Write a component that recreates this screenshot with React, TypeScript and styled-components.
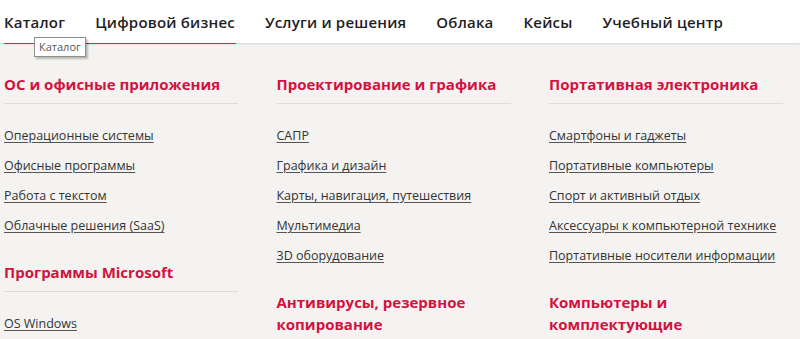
import React from "react";
import styled, { createGlobalStyle } from "styled-components";

const GlobalStyle = createGlobalStyle`
  html, body { margin: 0; padding: 0; }
  body {
    background: #f4f3f1;
    font-family: "Open Sans", "DejaVu Sans", sans-serif;
    color: #333;
    overflow: hidden;
  }
`;

const Header = styled.header`
  position: relative;
  height: 43px;
  background: #fff;
  box-shadow: 0 1px 2px rgba(0, 0, 0, 0.12);
  z-index: 2;
`;

const Nav = styled.nav`
  display: flex;
  align-items: center;
  height: 100%;
  padding-left: 4px;
  gap: 30px;
`;

const NavItem = styled.a`
  font-size: 15px;
  font-weight: 600;
  letter-spacing: 0.2px;
  color: #1e1e1e;
  text-decoration: none;
  white-space: nowrap;
`;

const ActiveLine = styled.div`
  position: absolute;
  left: 4px;
  bottom: -1px;
  width: 232px;
  height: 1px;
  background: #d4204a;
`;

const Tooltip = styled.div`
  position: absolute;
  left: 34px;
  top: 37px;
  padding: 1px 4px 2px;
  font-size: 11px;
  color: #575757;
  background: #fff;
  border: 1px solid #8e8e8e;
  box-shadow: 2px 2px 2px rgba(0, 0, 0, 0.25);
  z-index: 3;
`;

const Grid = styled.main`
  display: grid;
  grid-template-columns: repeat(3, 234px);
  column-gap: 38.5px;
  padding: 30px 4px 0;
  align-items: start;
`;

const Column = styled.div`
  display: flex;
  flex-direction: column;
  gap: 20px;
`;

const Section = styled.section``;

const Heading = styled.h3`
  margin: 0;
  padding-bottom: 8px;
  border-bottom: 1px solid #dedcd9;
  font-size: 15px;
  line-height: 22px;
  font-weight: 700;
  color: #d2123f;
`;

const List = styled.ul`
  list-style: none;
  margin: 0;
  padding: 17px 0 0;
`;

const Item = styled.li`
  line-height: 30px;
  font-size: 12.5px;
`;

const Link = styled.a`
  color: #333;
  text-decoration: underline;
  text-underline-offset: 2px;
  text-decoration-color: #555;
`;

type Sec = { title: string; links: string[] };

const columns: Sec[][] = [
  [
    {
      title: "ОС и офисные приложения",
      links: [
        "Операционные системы",
        "Офисные программы",
        "Работа с текстом",
        "Облачные решения (SaaS)",
      ],
    },
    { title: "Программы Microsoft", links: ["OS Windows"] },
  ],
  [
    {
      title: "Проектирование и графика",
      links: [
        "САПР",
        "Графика и дизайн",
        "Карты, навигация, путешествия",
        "Мультимедиа",
        "3D оборудование",
      ],
    },
    { title: "Антивирусы, резервное копирование", links: [] },
  ],
  [
    {
      title: "Портативная электроника",
      links: [
        "Смартфоны и гаджеты",
        "Портативные компьютеры",
        "Спорт и активный отдых",
        "Аксессуары к компьютерной технике",
        "Портативные носители информации",
      ],
    },
    { title: "Компьютеры и комплектующие", links: [] },
  ],
];

const navItems = [
  "Каталог",
  "Цифровой бизнес",
  "Услуги и решения",
  "Облака",
  "Кейсы",
  "Учебный центр",
];

export default function App() {
  return (
    <>
      <GlobalStyle />
      <Header>
        <Nav>
          {navItems.map((n) => (
            <NavItem key={n} href="#">
              {n}
            </NavItem>
          ))}
        </Nav>
        <ActiveLine />
        <Tooltip>Каталог</Tooltip>
      </Header>
      <Grid>
        {columns.map((col, i) => (
          <Column key={i}>
            {col.map((s) => (
              <Section key={s.title}>
                <Heading>{s.title}</Heading>
                {s.links.length > 0 && (
                  <List>
                    {s.links.map((l) => (
                      <Item key={l}>
                        <Link href="#">{l}</Link>
                      </Item>
                    ))}
                  </List>
                )}
              </Section>
            ))}
          </Column>
        ))}
      </Grid>
    </>
  );
}
